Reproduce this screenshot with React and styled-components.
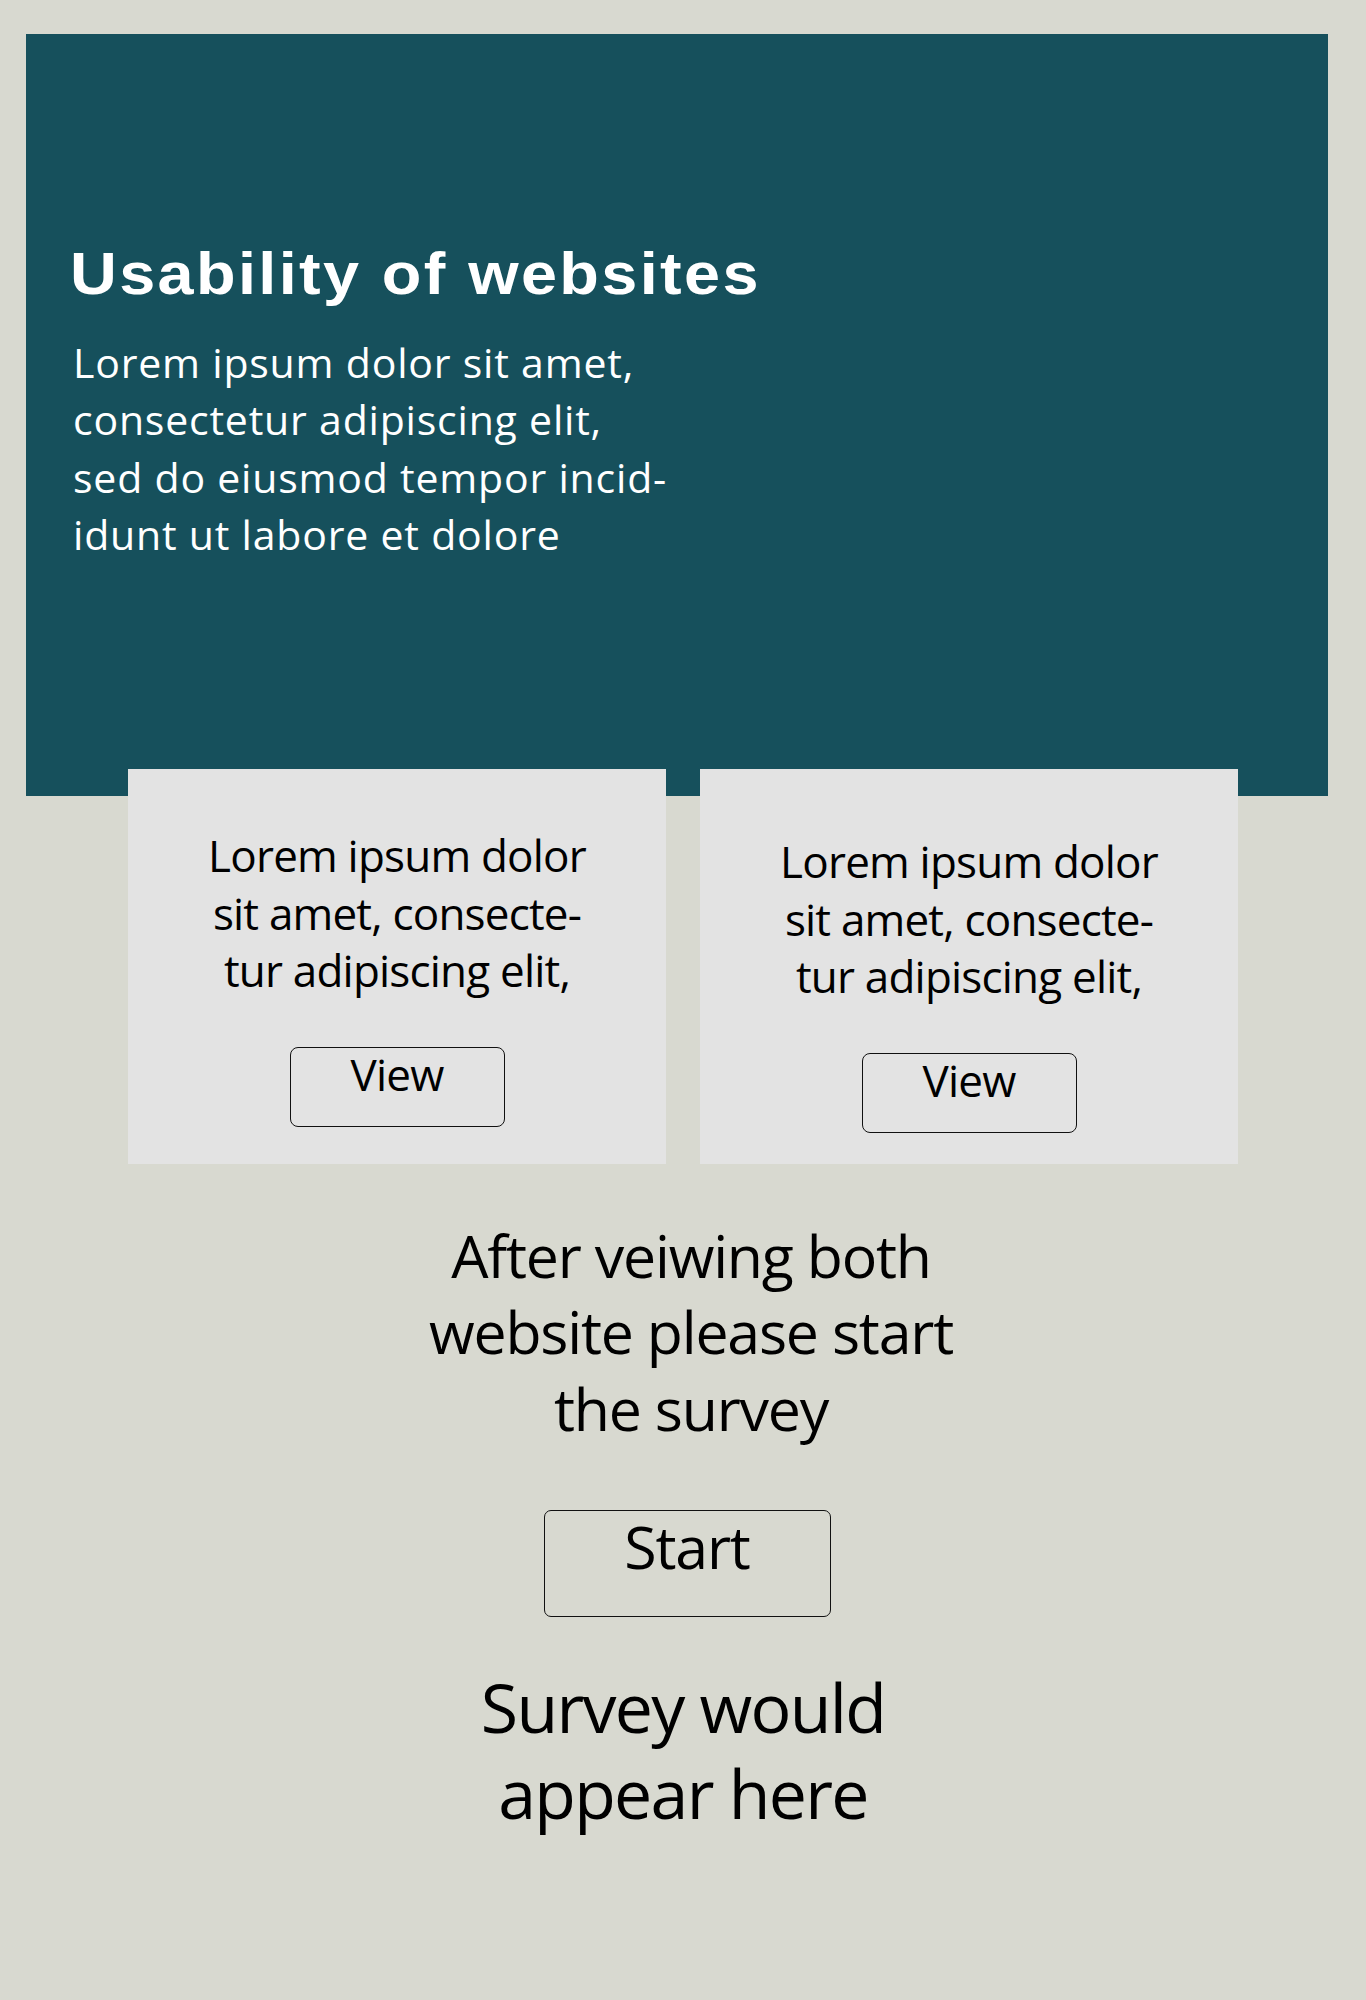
import React from "react";
import styled, { createGlobalStyle } from "styled-components";

const Global = createGlobalStyle`
  html, body {
    margin: 0;
    padding: 0;
    background: #d8d9d0;
  }
  body {
    min-height: 2000px;
    font-family: "Open Sans", "Noto Sans", sans-serif;
    color: #000;
  }
`;

const Page = styled.main`
  display: flex;
  flex-direction: column;
  align-items: stretch;
  min-height: 2000px;
  padding-top: 34px;
  box-sizing: border-box;
`;

const Hero = styled.section`
  margin: 0 38px 0 26px;
  height: 762px;
  box-sizing: border-box;
  background: #16505c;
  padding: 209px 0 0 44px;
  display: flex;
  flex-direction: column;
  align-items: flex-start;
`;

const Title = styled.h1`
  margin: 0;
  font-family: "Liberation Sans", Arial, sans-serif;
  font-weight: 700;
  font-size: 60px;
  line-height: 61px;
  letter-spacing: 2.2px;
  transform: scaleX(1.08);
  transform-origin: left center;
  white-space: nowrap;
  color: #fff;
`;

const Lead = styled.p`
  margin: 30px 0 0 3px;
  font-size: 41px;
  line-height: 57.4px;
  letter-spacing: 0.8px;
  color: #fff;
`;

const CardRow = styled.div`
  display: flex;
  justify-content: center;
  gap: 34px;
  margin-top: -27px;
`;

const Card = styled.article`
  width: 538px;
  height: 395px;
  box-sizing: border-box;
  background: #e3e3e3;
  padding-top: ${(p) => p.$top}px;
  display: flex;
  flex-direction: column;
  align-items: center;
`;

const CardText = styled.p`
  margin: 0;
  font-size: 44px;
  line-height: 57.5px;
  letter-spacing: -0.8px;
  text-align: center;
`;

const OutlineButton = styled.button`
  box-sizing: border-box;
  width: ${(p) => p.$w}px;
  height: ${(p) => p.$h}px;
  margin-top: ${(p) => p.$mt}px;
  margin-left: ${(p) => p.$shift || 0}px;
  padding: 0;
  border: 1px solid #111;
  border-radius: ${(p) => p.$r}px;
  background: transparent;
  font-family: "Open Sans", "Noto Sans", sans-serif;
  font-size: ${(p) => p.$fs}px;
  line-height: ${(p) => p.$lh}px;
  letter-spacing: ${(p) => p.$ls}px;
  color: #000;
  display: flex;
  justify-content: center;
  align-items: flex-start;
  cursor: pointer;
`;

const Bottom = styled.section`
  display: flex;
  flex-direction: column;
  align-items: center;
`;

const Instruction = styled.p`
  margin: 53px 0 0;
  padding-left: 16px;
  font-size: 59px;
  line-height: 76.4px;
  letter-spacing: -1.2px;
  text-align: center;
`;

const SurveyNote = styled.p`
  margin: 47px 0 0;
  font-size: 68px;
  line-height: 85.8px;
  letter-spacing: -1.7px;
  text-align: center;
`;

const cards = [
  { id: 1, top: 58 },
  { id: 2, top: 64 },
];

export default function App() {
  return (
    <>
      <Global />
      <Page>
        <Hero>
          <Title>Usability of websites</Title>
          <Lead>
            Lorem ipsum dolor sit amet,
            <br />
            consectetur adipiscing elit,
            <br />
            sed do eiusmod tempor incid-
            <br />
            idunt ut labore et dolore
          </Lead>
        </Hero>
        <CardRow>
          {cards.map((c) => (
            <Card key={c.id} $top={c.top}>
              <CardText>
                Lorem ipsum dolor
                <br />
                sit amet, consecte-
                <br />
                tur adipiscing elit,
              </CardText>
              <OutlineButton $w={215} $h={80} $mt={47} $r={8} $fs={44} $lh={52} $ls={-0.8}>
                View
              </OutlineButton>
            </Card>
          ))}
        </CardRow>
        <Bottom>
          <Instruction>
            After veiwing both
            <br />
            website please start
            <br />
            the survey
          </Instruction>
          <OutlineButton $w={287} $h={107} $mt={64} $r={7} $fs={59} $lh={70} $ls={-1.2} $shift={8}>
            Start
          </OutlineButton>
          <SurveyNote>
            Survey would
            <br />
            appear here
          </SurveyNote>
        </Bottom>
      </Page>
    </>
  );
}
